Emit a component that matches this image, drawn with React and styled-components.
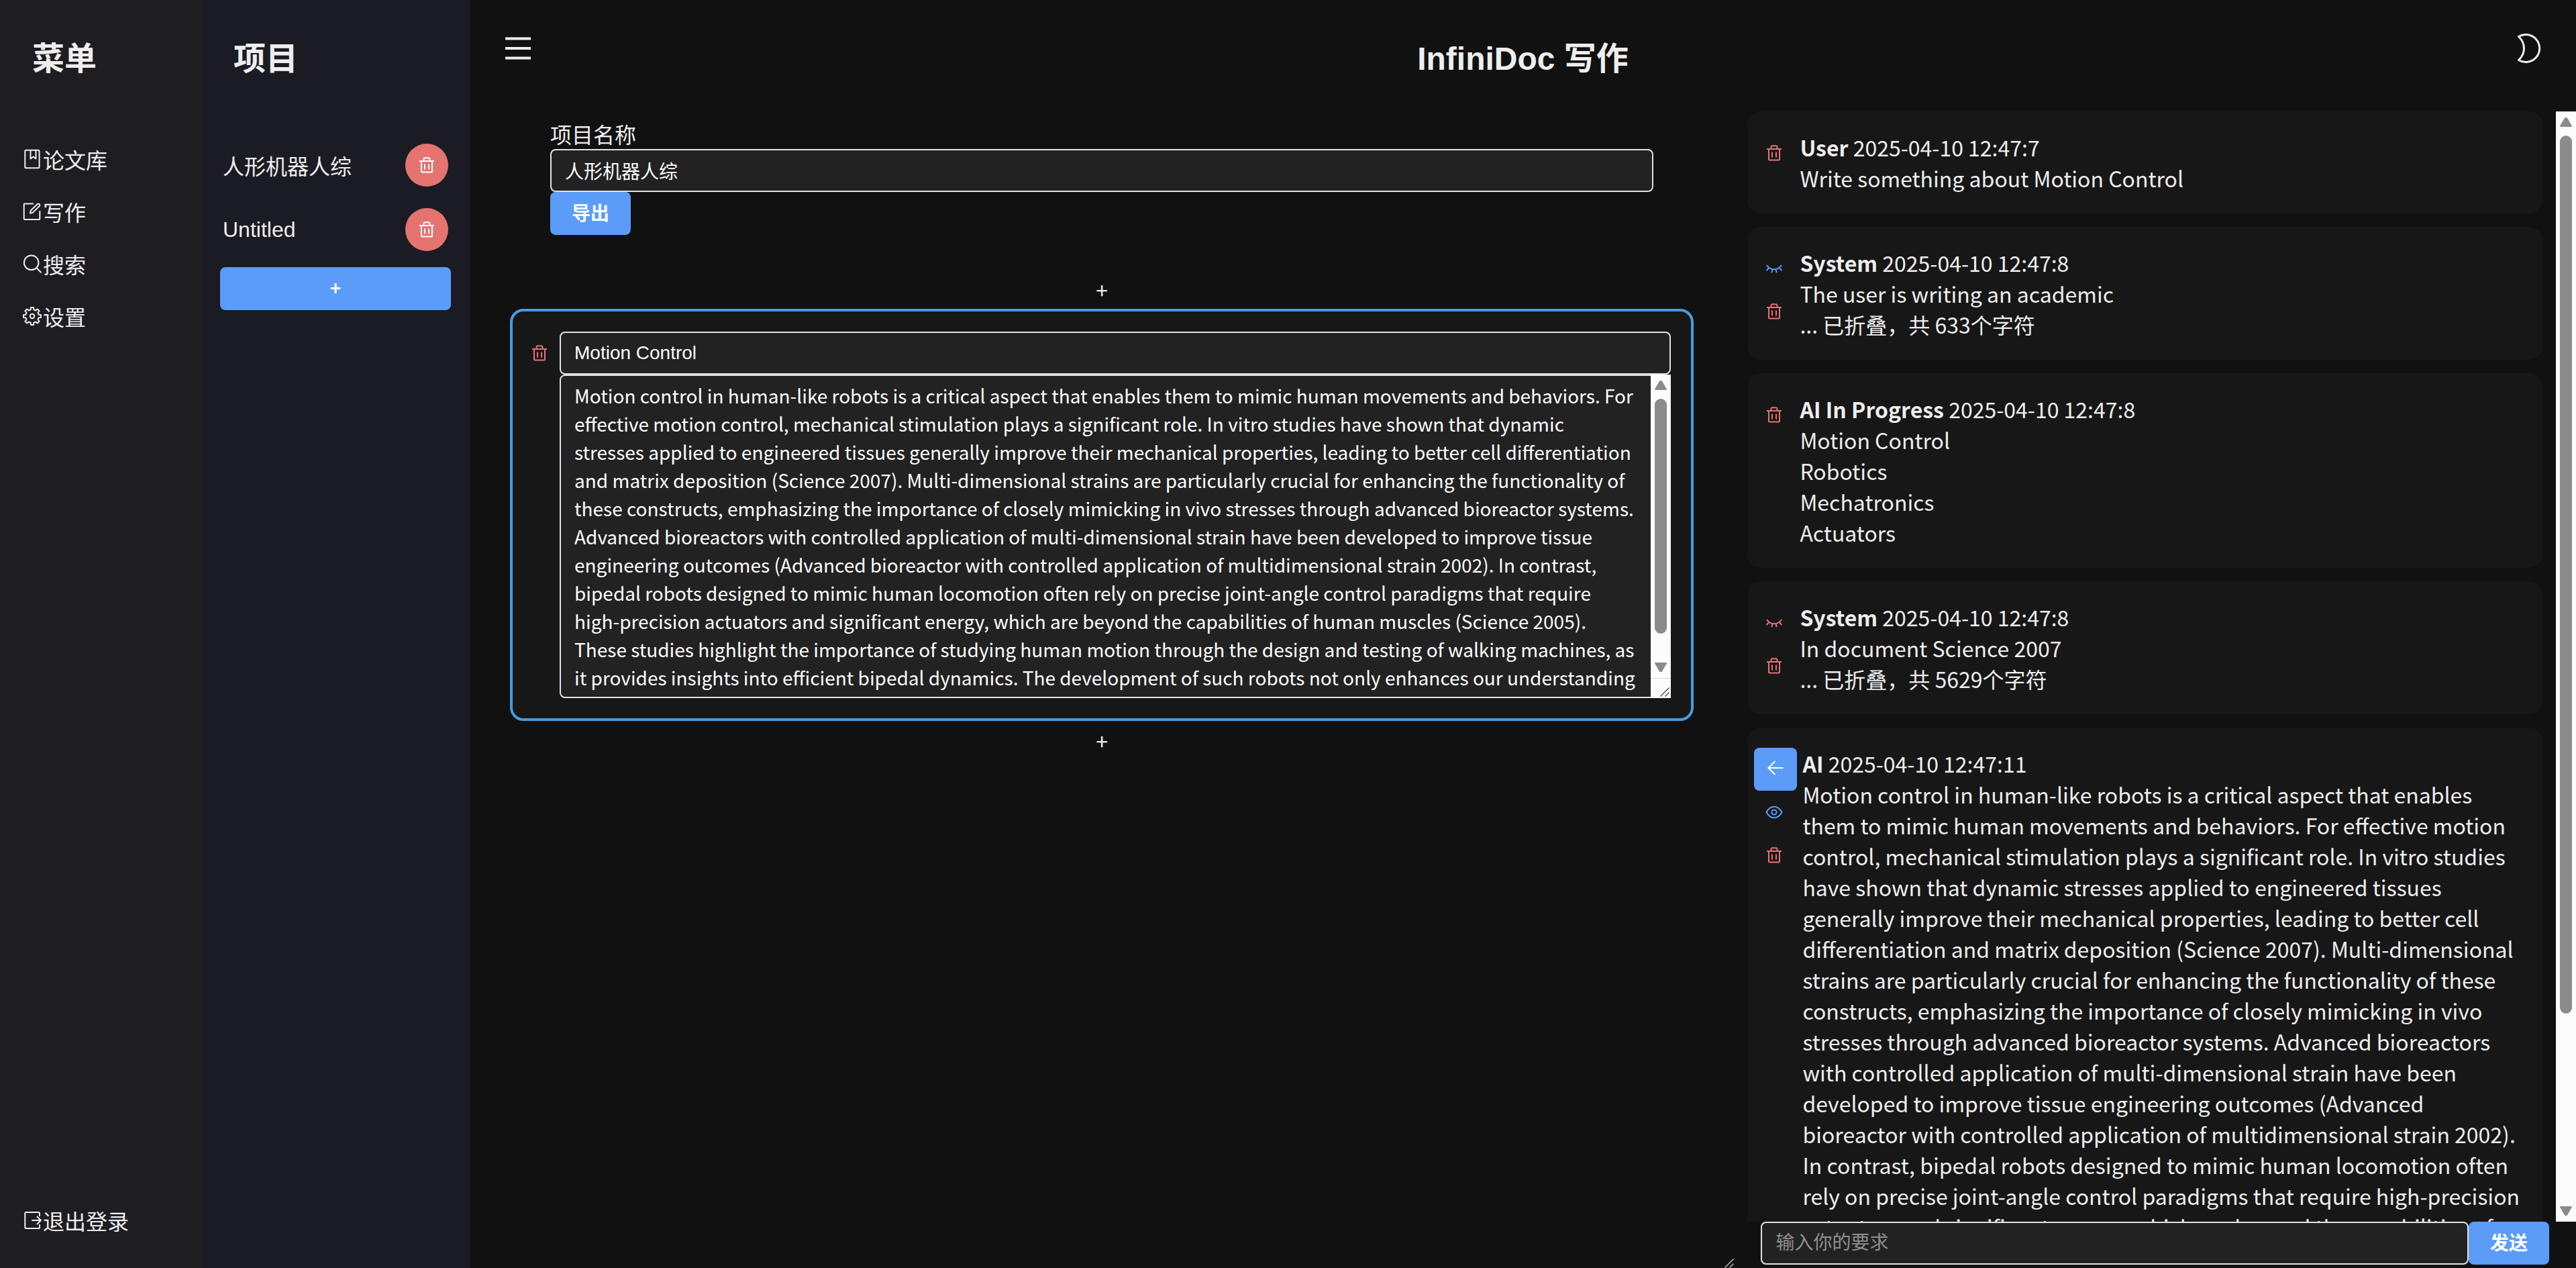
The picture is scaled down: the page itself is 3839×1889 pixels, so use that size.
import React from "react";
import styled, { createGlobalStyle, css } from "styled-components";

const sans = `"Liberation Sans", "Noto Sans CJK SC", sans-serif`;
const cjk = `"Noto Sans CJK SC", sans-serif`;

const color = {
  page: "#111111",
  menu: "#1e1d22",
  projects: "#1b1b23",
  card: "#171717",
  field: "#222222",
  border: "#e0e2e8",
  text: "#eeeeee",
  muted: "#8f8f8f",
  primary: "#5b9cf8",
  active: "#4a9ade",
  danger: "#e57470",
  track: "#fcfcfc",
  thumb: "#8b8b8b",
};

const GlobalStyle = createGlobalStyle`
  *, *::before, *::after { box-sizing: border-box; }
  html, body { margin: 0; background: ${color.page}; }
  body { font-family: ${cjk}; font-size: 32px; line-height: 46px; color: ${color.text}; overflow: hidden; }
  button, input, textarea { font-family: ${sans}; font-size: 28px; margin: 0; }
`;

/* ---------- layout ---------- */

const Shell = styled.div`
  display: flex;
  height: 100vh;
`;

const MenuBar = styled.nav`
  flex: 0 0 300px;
  display: flex;
  flex-direction: column;
  padding: 48px 32px;
  background: ${color.menu};
`;

const ProjectBar = styled.aside`
  flex: 0 0 400px;
  display: flex;
  flex-direction: column;
  padding: 48px 28px;
  background: ${color.projects};
`;

const Main = styled.main`
  flex: 1;
  min-width: 0;
  display: flex;
  flex-direction: column;
`;

const Header = styled.header`
  display: flex;
  align-items: flex-start;
  height: 166px;
  padding: 48px;
`;

const Title = styled.h1`
  flex: 1;
  margin: 0;
  font-family: ${sans};
  font-size: 48px;
  line-height: normal;
  text-align: center;
`;

const BarTitle = styled.h2`
  margin: 0 ${(p) => p.$inset}px 48px;
  font: bold 48px/70px ${cjk};
`;

const Columns = styled.div`
  flex: 1;
  min-height: 0;
  display: grid;
  grid-template-columns: calc(60% + 1px) minmax(0, 1fr);
`;

/* ---------- controls ---------- */

const PrimaryButton = styled.button`
  display: inline-flex;
  align-items: center;
  justify-content: center;
  flex: none;
  height: 64px;
  padding: 0 ${(p) => (p.$icon ? 18 : 32)}px 4px;
  border: 0;
  border-radius: 8px;
  background: ${color.primary};
  color: #fff;
  font-family: ${cjk};
  font-weight: bold;
`;

const RoundButton = styled.button`
  display: grid;
  place-items: center;
  width: 64px;
  height: 64px;
  padding: 0;
  border: 0;
  border-radius: 50%;
  background: ${color.danger};
  color: #fff;
`;

const GhostButton = styled.button`
  display: grid;
  place-items: center;
  flex: none;
  width: ${(p) => p.$width || 60}px;
  height: ${(p) => p.$height || 64}px;
  padding: 0;
  border: 0;
  background: none;
  color: ${(p) => p.$color || color.text};
`;

const InsertButton = styled.button`
  align-self: center;
  padding: 0 24px;
  border: 0;
  background: none;
  color: ${color.text};
  font: 32px/46px ${cjk};
`;

const fieldStyle = css`
  display: block;
  width: 100%;
  border: 2px solid ${color.border};
  border-radius: 8px;
  background: ${color.field};
  color: #fff;
  outline: none;
`;

const TextField = styled.input`
  ${fieldStyle}
  height: 64px;
  padding: 0 20px;
  &::placeholder { color: ${color.muted}; opacity: 1; }
`;

/* ---------- menu ---------- */

const MenuList = styled.div`
  flex: 1;
  display: flex;
  flex-direction: column;
  gap: 32px;
  padding-top: 48px;
`;

const MenuLink = styled.a`
  display: flex;
  align-items: center;
  color: ${color.text};
  text-decoration: none;
  & > svg { flex: none; }
`;

/* ---------- projects ---------- */

const ProjectList = styled.ul`
  list-style: none;
  margin: 32px 0 8px;
  padding: 0;
`;

const ProjectRow = styled.li`
  display: flex;
  align-items: center;
  justify-content: space-between;
  padding: 16px 4px;
  font-family: ${sans};
  line-height: normal;
`;

/* ---------- editor ---------- */

const EditorPane = styled.section`
  position: relative;
  display: flex;
  flex-direction: column;
  align-items: stretch;
  padding: 10px 60px;
  min-width: 0;
`;

const ProjectForm = styled.form`
  display: flex;
  flex-direction: column;
  align-items: flex-start;
  margin: 0 60px 58px;
`;

const Block = styled.article`
  display: flex;
  align-items: flex-start;
  margin: 6px 0;
  padding: 30px 30px 30px 10px;
  border: 4px solid ${color.active};
  border-radius: 20px;
  background: ${color.card};
`;

const BlockFields = styled.div`
  flex: 1;
  min-width: 0;
`;

const TextBox = styled.div`
  position: relative;
`;

const BlockText = styled.textarea`
  ${fieldStyle}
  padding: 8px 48px 8px 20px;
  overflow: hidden;
  resize: none;
  font-family: ${cjk};
  line-height: 42px;
`;

const TextBoxBar = styled.div`
  position: absolute;
  top: 0;
  right: 0;
  bottom: 0;
  display: flex;
  flex-direction: column;
`;

const ResizeCorner = styled.div`
  display: grid;
  place-items: end;
  height: 30px;
  padding: 2px;
  border-top: 1px solid #d8d8d8;
  background: ${color.track};
`;

const PaneGrip = styled.div`
  position: absolute;
  right: 0;
  bottom: 0;
  display: flex;
`;

/* ---------- scrollbar ---------- */

const Track = styled.div`
  flex: 1;
  display: flex;
  flex-direction: column;
  align-items: center;
  width: 30px;
  padding: 9px 0;
  background: ${color.track};
`;

const Groove = styled.div`
  flex: 1;
  margin: 13px 0;
`;

const Thumb = styled.div`
  width: 18px;
  border-radius: 9px;
  background: ${color.thumb};
`;

/* ---------- chat ---------- */

const ChatPane = styled.section`
  display: flex;
  flex-direction: column;
  min-width: 0;
  min-height: 0;
`;

const ChatScroller = styled.div`
  flex: 1;
  min-height: 0;
  display: flex;
`;

const ChatBar = styled.div`
  display: flex;
`;

const MessageList = styled.div`
  flex: 1;
  min-width: 0;
  display: flex;
  flex-direction: column;
  gap: 20px;
  padding: 0 20px;
  overflow: hidden;
`;

const MessageCard = styled.article`
  flex: none;
  display: flex;
  align-items: flex-start;
  gap: 8px;
  padding: 30px 30px 30px 10px;
  border-radius: 20px;
  background: ${color.card};
`;

/* Kept one button tall so that a second button does not stretch a short card. */
const MessageActions = styled.div`
  display: flex;
  flex-direction: column;
  align-items: flex-start;
  height: 64px;
`;

const MessageBody = styled.div`
  flex: 1;
  min-width: 0;
  white-space: pre-line;
`;

const Composer = styled.form`
  display: flex;
  margin: 0 40px 5px;
`;

/* ---------- icons ---------- */

const Icon = ({ size = 28, stroke = 2, children }) => (
  <svg
    width={size}
    height={size}
    viewBox={`0 0 ${size} ${size}`}
    fill="none"
    stroke="currentColor"
    strokeWidth={stroke}
    strokeLinejoin="round"
    aria-hidden="true"
  >
    {children}
  </svg>
);

const TrashIcon = () => (
  <Icon>
    <path d="M3 8H25M9.5 8V5Q9.5 3.300 11.200 3.300H16.800Q18.500 3.300 18.500 5V8M6 8V23Q6 24.500 7.500 24.500H20.500Q22 24.500 22 23V8M11 12.500V20.500M17 12.500V20.500" />
  </Icon>
);

const EyeClosedIcon = () => (
  <Icon>
    <path d="M2.700 9C6 13.200 10 15.300 14 15.300S22 13.200 25.300 9M2.700 17L6.700 12.500M10.300 20.300L11.500 15M17.700 20.300L16.500 15M25.300 17L21.300 12.500" />
  </Icon>
);

const EyeIcon = () => (
  <Icon>
    <path d="M2.500 14C5.500 8.500 9.500 5.800 14 5.800S22.500 8.500 25.500 14C22.500 19.500 18.500 22.200 14 22.200S5.500 19.500 2.500 14Z" />
    <circle cx="14" cy="14" r="3.500" />
  </Icon>
);

const ArrowLeftIcon = () => (
  <Icon>
    <path d="M25.500 14H3M13.500 4L3.300 14L13.500 24" />
  </Icon>
);

const BookIcon = () => (
  <Icon size={32}>
    <rect x="5.300" y="2.700" width="21.300" height="26.600" rx="1.500" />
    <path d="M13.500 3V15.500L17.500 12.500L21.500 15.500V3" />
  </Icon>
);

const EditIcon = () => (
  <Icon size={32}>
    <path d="M18 4.500H4.700Q3.700 4.500 3.700 5.500V27Q3.700 28 4.700 28H26.300Q27.300 28 27.300 27V15" />
    <path d="M13 18.500L13.700 14.800L23.700 5Q25.200 3.800 26.600 5.100Q27.900 6.500 26.700 8L16.700 17.900Z" />
  </Icon>
);

const SearchIcon = () => (
  <Icon size={32}>
    <circle cx="14.700" cy="14.300" r="10.800" />
    <path d="M22.300 22L29.500 29.300" />
  </Icon>
);

const gearPoints = Array.from({ length: 8 }, (_, i) =>
  [
    [-13, 10],
    [-9, 13.1],
    [9, 13.1],
    [13, 10],
  ].map(([offset, radius]) => {
    const angle = ((i * 45 + offset) * Math.PI) / 180;
    return `${(16 + radius * Math.sin(angle)).toFixed(2)},${(16 - radius * Math.cos(angle)).toFixed(2)}`;
  })
)
  .flat()
  .join(" ");

const GearIcon = () => (
  <Icon size={32}>
    <polygon points={gearPoints} />
    <circle cx="16" cy="16" r="3.200" />
  </Icon>
);

const LogoutIcon = () => (
  <Icon size={32}>
    <path d="M27 10V5.500Q27 4 25.500 4H6.800Q5.300 4 5.300 5.500V26.500Q5.300 28 6.800 28H25.500Q27 28 27 26.500V22M15.300 16H28.500M23 10L29 16L23 22" />
  </Icon>
);

const BurgerIcon = () => (
  <Icon size={48} stroke={4}>
    <path d="M5 9.500H43M5 24H43M5 38.500H43" />
  </Icon>
);

const MoonIcon = () => (
  <Icon size={48} stroke={3}>
    <path d="M10.500 6.500A20.500 20.500 0 1 1 10.500 41.500Q18.500 34 18.500 24T10.500 6.500Z" />
  </Icon>
);

const ScrollArrow = ({ down }) => (
  <svg width="18" height="14" viewBox="0 0 18 14" aria-hidden="true">
    <path
      d={down ? "M1 1H17L10 13H8Z" : "M1 13H17L10 1H8Z"}
      fill={color.thumb}
      stroke={color.thumb}
      strokeWidth="2"
      strokeLinejoin="round"
    />
  </svg>
);

const Grip = ({ stroke }) => (
  <svg width="14" height="14" viewBox="0 0 14 14" stroke={stroke} strokeWidth="1.500" aria-hidden="true">
    <path d="M0.500 13.500L13.500 0.500M7.500 13.500L13.500 7.500" />
  </svg>
);

const Scrollbar = ({ ratio }) => (
  <Track aria-hidden="true">
    <ScrollArrow />
    <Groove>
      <Thumb style={{ height: `${ratio * 100}%` }} />
    </Groove>
    <ScrollArrow down />
  </Track>
);

/* ---------- content ---------- */

const article =
  "Motion control in human-like robots is a critical aspect that enables them to mimic human movements and behaviors. For effective motion control, mechanical stimulation plays a significant role. In vitro studies have shown that dynamic stresses applied to engineered tissues generally improve their mechanical properties, leading to better cell differentiation and matrix deposition (Science 2007). Multi-dimensional strains are particularly crucial for enhancing the functionality of these constructs, emphasizing the importance of closely mimicking in vivo stresses through advanced bioreactor systems. Advanced bioreactors with controlled application of multi-dimensional strain have been developed to improve tissue engineering outcomes (Advanced bioreactor with controlled application of multidimensional strain 2002). In contrast, bipedal robots designed to mimic human locomotion often rely on precise joint-angle control paradigms that require high-precision actuators and significant energy, which are beyond the capabilities of human muscles (Science 2005). These studies highlight the importance of studying human motion through the design and testing of walking machines, as it provides insights into efficient bipedal dynamics. The development of such robots not only enhances our understanding";

const menu = [
  { label: "论文库", Glyph: BookIcon },
  { label: "写作", Glyph: EditIcon },
  { label: "搜索", Glyph: SearchIcon },
  { label: "设置", Glyph: GearIcon },
];

const projects = ["人形机器人综", "Untitled"];

const messages = [
  { from: "User", time: "2025-04-10 12:47:7", text: "Write something about Motion Control" },
  {
    from: "System",
    time: "2025-04-10 12:47:8",
    text: "The user is writing an academic\n... 已折叠，共 633个字符",
    eye: "closed",
    tone: color.primary,
  },
  {
    from: "AI In Progress",
    time: "2025-04-10 12:47:8",
    text: "Motion Control\nRobotics\nMechatronics\nActuators",
  },
  {
    from: "System",
    time: "2025-04-10 12:47:8",
    text: "In document Science 2007\n... 已折叠，共 5629个字符",
    eye: "closed",
    tone: color.danger,
  },
  { from: "AI", time: "2025-04-10 12:47:11", text: article, eye: "open", tone: color.primary, insert: true },
];

const Message = ({ from, time, text, eye, tone, insert }) => (
  <MessageCard>
    <MessageActions>
      {insert && (
        <PrimaryButton type="button" $icon aria-label="插入">
          <ArrowLeftIcon />
        </PrimaryButton>
      )}
      {eye && (
        <GhostButton type="button" $color={tone} aria-label="折叠">
          {eye === "open" ? <EyeIcon /> : <EyeClosedIcon />}
        </GhostButton>
      )}
      <GhostButton type="button" $color={color.danger} aria-label="删除">
        <TrashIcon />
      </GhostButton>
    </MessageActions>
    <MessageBody>
      <strong>{from}</strong> {time}
      {"\n"}
      {text}
    </MessageBody>
  </MessageCard>
);

export default function App() {
  return (
    <>
      <GlobalStyle />
      <Shell>
        <MenuBar>
          <BarTitle $inset={16}>菜单</BarTitle>
          <MenuList>
            {menu.map(({ label, Glyph }) => (
              <MenuLink key={label} href="#">
                <Glyph />
                {label}
              </MenuLink>
            ))}
          </MenuList>
          <MenuLink href="#">
            <LogoutIcon />
            退出登录
          </MenuLink>
        </MenuBar>

        <ProjectBar>
          <BarTitle $inset={20}>项目</BarTitle>
          <ProjectList>
            {projects.map((name) => (
              <ProjectRow key={name}>
                {name}
                <RoundButton type="button" aria-label="删除">
                  <TrashIcon />
                </RoundButton>
              </ProjectRow>
            ))}
          </ProjectList>
          <PrimaryButton type="button">+</PrimaryButton>
        </ProjectBar>

        <Main>
          <Header>
            <GhostButton type="button" $width={48} $height={48} aria-label="菜单">
              <BurgerIcon />
            </GhostButton>
            <Title>InfiniDoc 写作</Title>
            <GhostButton type="button" $width={48} $height={48} aria-label="主题">
              <MoonIcon />
            </GhostButton>
          </Header>

          <Columns>
            <EditorPane>
              <ProjectForm onSubmit={(e) => e.preventDefault()}>
                <label htmlFor="project-name">项目名称</label>
                <TextField id="project-name" defaultValue="人形机器人综" />
                <PrimaryButton type="button">导出</PrimaryButton>
              </ProjectForm>
              <InsertButton type="button">+</InsertButton>
              <Block>
                <GhostButton type="button" $color={color.danger} aria-label="删除">
                  <TrashIcon />
                </GhostButton>
                <BlockFields>
                  <TextField aria-label="标题" defaultValue="Motion Control" />
                  <TextBox>
                    <BlockText aria-label="正文" rows={11} defaultValue={article} />
                    <TextBoxBar>
                      <Scrollbar ratio={0.92} />
                      <ResizeCorner>
                        <Grip stroke="#555555" />
                      </ResizeCorner>
                    </TextBoxBar>
                  </TextBox>
                </BlockFields>
              </Block>
              <InsertButton type="button">+</InsertButton>
              <PaneGrip>
                <Grip stroke="#bbbbbb" />
              </PaneGrip>
            </EditorPane>

            <ChatPane>
              <ChatScroller>
                <MessageList>
                  {messages.map((message, index) => (
                    <Message key={index} {...message} />
                  ))}
                </MessageList>
                <ChatBar>
                  <Scrollbar ratio={0.827} />
                </ChatBar>
              </ChatScroller>
              <Composer onSubmit={(e) => e.preventDefault()}>
                <TextField aria-label="输入你的要求" placeholder="输入你的要求" />
                <PrimaryButton type="submit">发送</PrimaryButton>
              </Composer>
            </ChatPane>
          </Columns>
        </Main>
      </Shell>
    </>
  );
}
